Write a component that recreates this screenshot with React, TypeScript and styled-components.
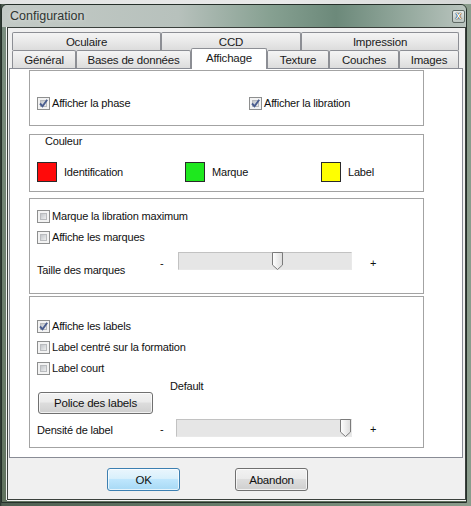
import React from "react";
import styled, { createGlobalStyle } from "styled-components";

const GlobalStyle = createGlobalStyle`
  html, body { margin: 0; padding: 0; }
  body {
    background: #56685a;
    font-family: "Liberation Sans", Arial, sans-serif;
    font-size: 11px;
    color: #111;
  }
  * { box-sizing: border-box; }
`;

const Desktop = styled.div`
  width: 471px;
  height: 506px;
  overflow: hidden;
  background: linear-gradient(90deg, #26302a 0px, #4d5e50 2px, #6f8472 60%, #8a9c8c 100%);
  display: flex;
  flex-direction: column;
`;

const TopStrip = styled.div`
  flex: none;
  height: 4px;
  background: linear-gradient(90deg, #e2e4e3 0%, #e9e9e9 60%, #d4d6d5 100%);
`;

const Window = styled.div`
  flex: none;
  margin-left: 1px;
  width: 466px;
  height: 499px;
  border: 1px solid #26302a;
  border-radius: 6px 6px 0 0;
  overflow: hidden;
  display: flex;
  flex-direction: column;
  background: linear-gradient(180deg, #7c8f81 0%, #61735f 100%);
`;

const TitleBar = styled.div`
  flex: none;
  height: 22px;
  display: flex;
  align-items: center;
  justify-content: space-between;
  padding: 0 1px 0 8px;
  background: linear-gradient(90deg, #c3cac6 0%, #b7c1bc 38%, #86a091 58%, #6c897a 72%, #97aba0 88%, #b9c4be 100%);
`;

const Title = styled.span`
  font-size: 12.5px;
  color: #2f3532;
  text-shadow: 0 0 4px rgba(255, 255, 255, 0.6);
`;

const CloseButton = styled.span`
  width: 13px;
  height: 13px;
  border: 1px solid #5f6a65;
  border-radius: 2px;
  background: linear-gradient(180deg, #e6ebe9, #bcc6c1);
  display: flex;
  align-items: center;
  justify-content: center;
  font-size: 10px;
  font-weight: bold;
  line-height: 1;
  color: #fff;
  text-shadow: 0 0 1px #222, 0 0 1px #222, 0 0 1px #222;
`;

const Frame = styled.div`
  flex: 1;
  padding: 0 0 2px 5px;
`;

const Client = styled.div`
  height: 473px;
  background: #f0f0f0;
  border: 1px solid #3a403c;
  box-shadow: -1px 0 0 #f4f4f4, 0 1px 0 #f4f4f4;
  padding: 4px 2px 0 1px;
  display: flex;
  flex-direction: column;
`;

const TabRows = styled.div`
  margin: 0 2px 0 3px;
  display: flex;
  flex-direction: column;
`;

const TabRow = styled.div`
  display: flex;
  align-items: flex-start;
  height: 18px;
`;

const Tab = styled.div<{ $w: number; $active?: boolean }>`
  flex: none;
  width: ${(p) => p.$w}px;
  height: ${(p) => (p.$active ? 21 : 18)}px;
  margin-top: ${(p) => (p.$active ? -2 : 0)}px;
  position: relative;
  z-index: ${(p) => (p.$active ? 2 : 0)};
  border: 1px solid #8c8e94;
  border-bottom: 0;
  border-radius: 2px 2px 0 0;
  background: ${(p) =>
    p.$active ? "#ffffff" : "linear-gradient(180deg, #f4f4f4 0%, #e9e9e9 50%, #dcdcdc 100%)"};
  display: flex;
  justify-content: center;
  padding-top: 2px;
  font-size: 11.5px;
  letter-spacing: -0.2px;
  color: #1a1a1a;
  line-height: 14px;
`;

const Panel = styled.div`
  height: 390px;
  background: #ffffff;
  border: 1px solid #898c95;
  padding: 1px 0 0 19px;
  display: flex;
  flex-direction: column;
`;

const Group = styled.div<{ $h: number; $mt?: number; $pt?: number }>`
  flex: none;
  width: 395px;
  height: ${(p) => p.$h}px;
  margin-top: ${(p) => p.$mt ?? 0}px;
  border: 1px solid #a3a3a3;
  padding: ${(p) => p.$pt ?? 0}px 0 0 7px;
  display: flex;
  flex-direction: column;
`;

const TwoCols = styled.div`
  display: grid;
  grid-template-columns: 212px auto;
`;

const CheckList = styled.div`
  display: flex;
  flex-direction: column;
  gap: 8px;
`;

const CheckRow = styled.label`
  display: flex;
  align-items: center;
  gap: 2px;
  height: 13px;
  line-height: 13px;
  letter-spacing: -0.2px;
  white-space: nowrap;
`;

const Box = styled.span`
  flex: none;
  width: 13px;
  height: 13px;
  border: 1px solid #8e8f8f;
  background: #f3f3f3;
  padding: 2px;
  display: flex;
`;

const BoxInner = styled.span`
  flex: 1;
  background: linear-gradient(135deg, #c3c6ca 0%, #dcdee0 60%, #eeeeee 100%);
  border: 1px solid #b9bbbe;
  position: relative;
`;

const CheckMark = styled.svg`
  position: absolute;
  left: -3px;
  top: -3px;
  width: 11px;
  height: 11px;
`;

const GroupTitle = styled.div`
  margin-left: 8px;
  line-height: 12px;
  height: 12px;
  letter-spacing: -0.2px;
`;

const ColorRow = styled.div`
  margin-top: 15px;
  display: grid;
  grid-template-columns: 148px 136px auto;
`;

const ColorItem = styled.div`
  display: flex;
  align-items: center;
  gap: 7px;
  letter-spacing: -0.2px;
`;

const Swatch = styled.span<{ $c: string }>`
  flex: none;
  width: 20px;
  height: 20px;
  border: 1px solid #2a2a2a;
  background: ${(p) => p.$c};
`;

const SliderRow = styled.div<{ $mt: number; $dash: number; $track: number }>`
  margin-top: ${(p) => p.$mt}px;
  display: grid;
  grid-template-columns: 123px ${(p) => p.$dash}px ${(p) => p.$track}px auto;
  align-items: start;
`;

const SliderText = styled.span<{ $off: number; $ml?: number }>`
  margin-top: ${(p) => p.$off}px;
  margin-left: ${(p) => p.$ml ?? 0}px;
  line-height: 14px;
  letter-spacing: -0.2px;
  white-space: nowrap;
`;

const Track = styled.div`
  position: relative;
  height: 18px;
  background: #e6e6e6;
  border: 1px solid;
  border-color: #c2c2c2 #e9e9e9 #e9e9e9 #c2c2c2;
`;

const Thumb = styled.svg`
  position: absolute;
  top: -1px;
  width: 11px;
  height: 18px;
`;

const DefaultText = styled.div`
  margin: 6px 0 0 133px;
  height: 11px;
  line-height: 11px;
  letter-spacing: -0.2px;
`;

const PushButton = styled.button<{ $w: number; $h: number; $primary?: boolean; $ml?: number }>`
  flex: none;
  width: ${(p) => p.$w}px;
  height: ${(p) => p.$h}px;
  margin-left: ${(p) => p.$ml ?? 0}px;
  padding: 0;
  font-family: "Liberation Sans", Arial, sans-serif;
  font-size: 11.5px;
  letter-spacing: -0.2px;
  color: #111;
  border-radius: 3px;
  border: 1px solid ${(p) => (p.$primary ? "#3c7fb1" : "#707070")};
  background: ${(p) =>
    p.$primary
      ? "linear-gradient(180deg, #eaf6fd 0%, #d9f0fc 45%, #bee6fd 50%, #a7d9f5 100%)"
      : "linear-gradient(180deg, #f2f2f2 0%, #ebebeb 45%, #dddddd 50%, #cfcfcf 100%)"};
  box-shadow: inset 0 0 0 1px rgba(255, 255, 255, 0.7);
`;

const ButtonRow = styled.div`
  margin-top: 10px;
  padding-left: 98px;
  display: flex;
  gap: 55px;
`;

function CheckBox({ label, checked }: { label: string; checked?: boolean }) {
  return (
    <CheckRow>
      <Box>
        <BoxInner>
          {checked && (
            <CheckMark viewBox="0 0 11 11">
              <path d="M2 5.5 L4.5 8.2 L9.2 1.8" fill="none" stroke="#4a5d8e" strokeWidth="1.9" />
            </CheckMark>
          )}
        </BoxInner>
      </Box>
      {label}
    </CheckRow>
  );
}

function Slider({
  id,
  label,
  value,
  mt,
  dash,
  track,
  labelOff,
  signOff,
}: {
  id: string;
  label: string;
  value: number;
  mt: number;
  dash: number;
  track: number;
  labelOff: number;
  signOff: number;
}) {
  const left = Math.round((track - 2 - 11) * value);
  return (
    <SliderRow $mt={mt} $dash={dash} $track={track}>
      <SliderText $off={labelOff}>{label}</SliderText>
      <SliderText $off={signOff}>-</SliderText>
      <Track>
        <Thumb viewBox="0 0 11 18" style={{ left }}>
          <defs>
            <linearGradient id={id} x1="0" y1="0" x2="1" y2="0">
              <stop offset="0" stopColor="#ffffff" />
              <stop offset="1" stopColor="#dcdcdc" />
            </linearGradient>
          </defs>
          <path d="M0.5 0.5 H10.5 V13 L5.5 17.5 L0.5 13 Z" fill={`url(#${id})`} stroke="#7b7b7b" />
        </Thumb>
      </Track>
      <SliderText $off={signOff} $ml={18}>
        +
      </SliderText>
    </SliderRow>
  );
}

export default function App() {
  return (
    <>
      <GlobalStyle />
      <Desktop>
        <TopStrip />
        <Window>
          <TitleBar>
            <Title>Configuration</Title>
            <CloseButton>x</CloseButton>
          </TitleBar>
          <Frame>
            <Client>
              <TabRows>
                <TabRow>
                  <Tab $w={149}>Oculaire</Tab>
                  <Tab $w={140}>CCD</Tab>
                  <Tab $w={158}>Impression</Tab>
                </TabRow>
                <TabRow>
                  <Tab $w={64}>Général</Tab>
                  <Tab $w={115}>Bases de données</Tab>
                  <Tab $w={76} $active>
                    Affichage
                  </Tab>
                  <Tab $w={62}>Texture</Tab>
                  <Tab $w={70}>Couches</Tab>
                  <Tab $w={60}>Images</Tab>
                </TabRow>
              </TabRows>
              <Panel>
                <Group $h={56} $pt={26}>
                  <TwoCols>
                    <CheckBox label="Afficher la phase" checked />
                    <CheckBox label="Afficher la libration" checked />
                  </TwoCols>
                </Group>
                <Group $h={58} $mt={8}>
                  <GroupTitle>Couleur</GroupTitle>
                  <ColorRow>
                    <ColorItem>
                      <Swatch $c="#ff0a0a" />
                      Identification
                    </ColorItem>
                    <ColorItem>
                      <Swatch $c="#1ee81e" />
                      Marque
                    </ColorItem>
                    <ColorItem>
                      <Swatch $c="#ffff00" />
                      Label
                    </ColorItem>
                  </ColorRow>
                </Group>
                <Group $h={96} $mt={6} $pt={11}>
                  <CheckList>
                    <CheckBox label="Marque la libration maximum" />
                    <CheckBox label="Affiche les marques" />
                  </CheckList>
                  <Slider
                    id="thumbA"
                    label="Taille des marques"
                    value={0.58}
                    mt={8}
                    dash={18}
                    track={174}
                    labelOff={11}
                    signOff={4}
                  />
                </Group>
                <Group $h={152} $mt={2} $pt={23}>
                  <CheckList>
                    <CheckBox label="Affiche les labels" checked />
                    <CheckBox label="Label centré sur la formation" />
                    <CheckBox label="Label court" />
                  </CheckList>
                  <DefaultText>Default</DefaultText>
                  <PushButton $w={115} $h={22} $ml={1}>
                    Police des labels
                  </PushButton>
                  <Slider
                    id="thumbB"
                    label="Densité de label"
                    value={1}
                    mt={5}
                    dash={16}
                    track={176}
                    labelOff={4}
                    signOff={3}
                  />
                </Group>
              </Panel>
              <ButtonRow>
                <PushButton $w={73} $h={23} $primary>
                  OK
                </PushButton>
                <PushButton $w={73} $h={23}>
                  Abandon
                </PushButton>
              </ButtonRow>
            </Client>
          </Frame>
        </Window>
      </Desktop>
    </>
  );
}
